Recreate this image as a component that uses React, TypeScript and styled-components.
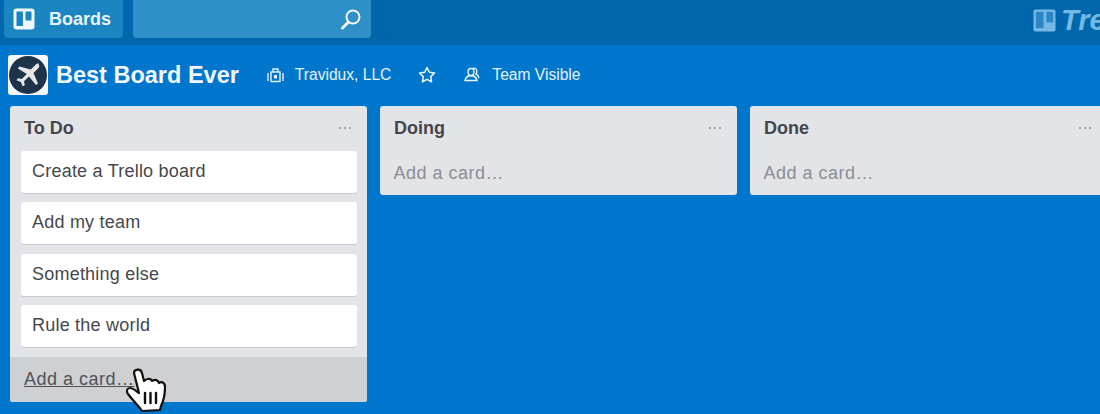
import React from "react";
import styled, { createGlobalStyle } from "styled-components";

const Global = createGlobalStyle`
  html, body { margin: 0; padding: 0; background: #0077cc; }
  body { font-family: "Liberation Sans", Arial, sans-serif; }
  #root { width: 1100px; height: 414px; overflow: hidden; }
`;

const Page = styled.div`
  width: 1100px;
  height: 414px;
  overflow: hidden;
  background: #0077cc;
  display: flex;
  flex-direction: column;
`;

const TopBar = styled.header`
  height: 45px;
  flex: none;
  background: #0067ad;
  display: flex;
  align-items: flex-start;
  padding-left: 4px;
  gap: 10px;
  box-sizing: border-box;
`;

const BoardsButton = styled.div`
  width: 119px;
  height: 38px;
  background: #1a85c0;
  border-radius: 0 0 4px 4px;
  display: flex;
  align-items: center;
  gap: 14px;
  padding-left: 9px;
  box-sizing: border-box;
  color: #e8f3fa;
  font-weight: 700;
  font-size: 18px;
`;

const SearchBox = styled.div`
  width: 238px;
  height: 38px;
  background: #2f90c7;
  border-radius: 0 0 4px 4px;
  display: flex;
  align-items: center;
  justify-content: flex-end;
  padding-right: 8px;
  box-sizing: border-box;
`;

const Logo = styled.div`
  margin-left: auto;
  height: 40px;
  width: 67px;
  display: flex;
  align-items: center;
  gap: 5px;
  overflow: hidden;
  color: #74b9e4;
  font-family: "Liberation Sans", Arial, sans-serif;
  font-style: italic;
  font-weight: 700;
  font-size: 29px;
  white-space: nowrap;
`;

const BoardHeader = styled.div`
  height: 61px;
  flex: none;
  display: flex;
  align-items: center;
  padding: 0 0 2px 8px;
  box-sizing: border-box;
  color: #f0f7fc;
`;

const Avatar = styled.div`
  width: 40px;
  height: 40px;
  border-radius: 3px;
  background: #f4f6f8;
  display: flex;
  align-items: center;
  justify-content: center;
  margin-right: 8px;
`;

const BoardTitle = styled.h1`
  margin: 0 28px 0 0;
  font-size: 23.5px;
  line-height: 30px;
  font-weight: 700;
  color: #f2f8fc;
`;

const Meta = styled.div<{ $gap: number; $after: number }>`
  display: flex;
  align-items: center;
  gap: ${(p) => p.$gap}px;
  margin-right: ${(p) => p.$after}px;
  font-size: 15.6px;
  color: #e6f1f9;
`;

const Lists = styled.main`
  display: flex;
  align-items: flex-start;
  gap: 13px;
  padding-left: 10px;
  flex: none;
`;

const List = styled.section`
  width: 357px;
  flex: none;
  background: #e3e4e8;
  border-radius: 3px;
  box-sizing: border-box;
`;

const ListHead = styled.div`
  height: 45px;
  display: flex;
  align-items: center;
  justify-content: space-between;
  padding: 0 16px 0 14px;
  box-sizing: border-box;
`;

const ListTitle = styled.h2`
  margin: 0;
  font-size: 18px;
  font-weight: 700;
  color: #44464b;
`;

const Dots = styled.div`
  display: flex;
  gap: 2.5px;
  margin-bottom: 1px;
`;

const Dot = styled.span`
  width: 2.5px;
  height: 2.5px;
  border-radius: 50%;
  background: #8f9297;
`;

const Cards = styled.div`
  display: flex;
  flex-direction: column;
  gap: 9.4px;
  padding: 0 10px 9.8px 11px;
`;

const Card = styled.div`
  height: 42px;
  background: #ffffff;
  border-radius: 3px;
  box-shadow: 0 1px 0 #c8c9cd;
  display: flex;
  align-items: center;
  padding: 0 0 1px 11px;
  box-sizing: border-box;
  font-size: 18px;
  letter-spacing: 0.22px;
  color: #46484c;
`;

const AddCard = styled.div<{ $hover?: boolean }>`
  height: ${(p) => (p.$hover ? 45 : 44)}px;
  display: flex;
  align-items: center;
  padding: 1px 0 0 ${(p) => (p.$hover ? 14 : 13.5)}px;
  box-sizing: border-box;
  position: relative;
  border-radius: 0 0 3px 3px;
  font-size: 18px;
  letter-spacing: 0.5px;
  background: ${(p) => (p.$hover ? "#ced0d3" : "transparent")};
  color: ${(p) => (p.$hover ? "#505257" : "#8b8d92")};
  text-decoration: ${(p) => (p.$hover ? "underline" : "none")};
`;

const Cursor = styled.svg`
  position: absolute;
  left: 116px;
  top: 11px;
`;

const BoardGlyph = () => (
  <svg width="22" height="22" viewBox="0 0 22 22">
    <rect x="0.500" y="0.500" width="21" height="21" rx="3" fill="#f2f8fc" />
    <rect x="3.500" y="3.500" width="6.500" height="14.500" fill="#1a85c0" />
    <rect x="12.500" y="3.500" width="6" height="9" fill="#1a85c0" />
  </svg>
);

const App = () => {
  const todo = ["Create a Trello board", "Add my team", "Something else", "Rule the world"];
  const dots = (
    <Dots>
      <Dot />
      <Dot />
      <Dot />
    </Dots>
  );
  return (
    <Page>
      <Global />
      <TopBar>
        <BoardsButton>
          <BoardGlyph />
          Boards
        </BoardsButton>
        <SearchBox>
          <svg width="24" height="24" viewBox="0 0 24 24" fill="none" stroke="#f2f8fc">
            <circle cx="14" cy="10" r="6.500" strokeWidth="2" />
            <path d="M9.500 15 L3.500 21" strokeWidth="3" strokeLinecap="round" />
          </svg>
        </SearchBox>
        <Logo>
          <svg width="23" height="23" viewBox="0 0 24 24" style={{ flex: "none" }}>
            <rect x="0.500" y="0.500" width="23" height="23" rx="2" fill="#74b9e4" />
            <rect x="3" y="3" width="8" height="17" fill="#2c86c4" />
            <rect x="14" y="3" width="7" height="11" fill="#2c86c4" />
          </svg>
          Trello
        </Logo>
      </TopBar>
      <BoardHeader>
        <Avatar>
          <svg width="38" height="38" viewBox="0 0 38 38">
            <circle cx="19" cy="19" r="19" fill="#1d3349" />
            <path
              d="M29.500 8.500c1.500 1 .8 2.800-.5 4l-4.500 4.500 4.500 10.500-2 1.500-7-8.500-5 4.800.8 3.800-2 1.500-2-4.500-4.300-1.800 1.500-2 3.800.7 5-5-9-5.500 1.500-2 11.500 3 4.500-4.500c1.300-1.300 3-1.900 3.700-1z"
              fill="#e8e6e4"
            />
          </svg>
        </Avatar>
        <BoardTitle>Best Board Ever</BoardTitle>
        <Meta $gap={11} $after={27}>
          <svg width="17" height="16" viewBox="0 0 17 16" fill="none" stroke="#e6f1f9" strokeWidth="1.400">
            <rect x="4" y="5" width="9" height="9.500" />
            <path d="M6 5V2h5v3M1 6v8M16 6v8" />
            <rect x="7" y="8" width="3" height="3.500" fill="#e6f1f9" stroke="none" />
          </svg>
          Travidux, LLC
        </Meta>
        <Meta $gap={0} $after={28}>
          <svg width="18" height="17" viewBox="0 0 18 17" fill="none" stroke="#f0f7fc" strokeWidth="1.500" strokeLinejoin="round">
            <path d="M9 1.500l2.300 4.800 5.200.7-3.800 3.600.9 5.200L9 13.300l-4.600 2.500.9-5.200L1.500 7l5.200-.7z" />
          </svg>
        </Meta>
        <Meta $gap={12} $after={0}>
          <svg width="16" height="15" viewBox="0 0 16 15" fill="none" stroke="#e6f1f9" strokeWidth="1.400">
            <path d="M4 5c0-2 1-3.500 3-3.500S10 3 10 5s-1 3.500-3 3.500S4 7 4 5zM1 13.500c.5-2.500 2-4 3.500-4.500h5c1.500.5 3 2 3.500 4.500zM9 1.500c2-.8 3.800.7 3.800 2.800 0 1-.3 2-.8 2.700 1.500.5 2.500 2 3 4" />
          </svg>
          Team Visible
        </Meta>
      </BoardHeader>
      <Lists>
        <List>
          <ListHead>
            <ListTitle>To Do</ListTitle>
            {dots}
          </ListHead>
          <Cards>
            {todo.map((t) => (
              <Card key={t}>{t}</Card>
            ))}
          </Cards>
          <AddCard $hover>
            Add a card…
            <Cursor width="40" height="44" viewBox="0 0 40 44">
              <path
                d="M8 5C8 1 15 0 16 5L18 13C21 10 25 10 26 13C29 11 32 12 33 15C36 13 39 15 39 19C39 26 38 32 35 38L34 42L16 43C13 38 8 34 2 26C0 23 1 20 4 20C7 20 10 23 13 25L8 5Z"
                fill="#fff"
                stroke="#111"
                strokeWidth="2.200"
                strokeLinejoin="round"
              />
              <path d="M19 25v10M24.500 25v10M30 25v10" stroke="#111" strokeWidth="2.400" strokeLinecap="round" />
            </Cursor>
          </AddCard>
        </List>
        <List>
          <ListHead>
            <ListTitle>Doing</ListTitle>
            {dots}
          </ListHead>
          <AddCard>Add a card…</AddCard>
        </List>
        <List>
          <ListHead>
            <ListTitle>Done</ListTitle>
            {dots}
          </ListHead>
          <AddCard>Add a card…</AddCard>
        </List>
      </Lists>
    </Page>
  );
};

export default App;
